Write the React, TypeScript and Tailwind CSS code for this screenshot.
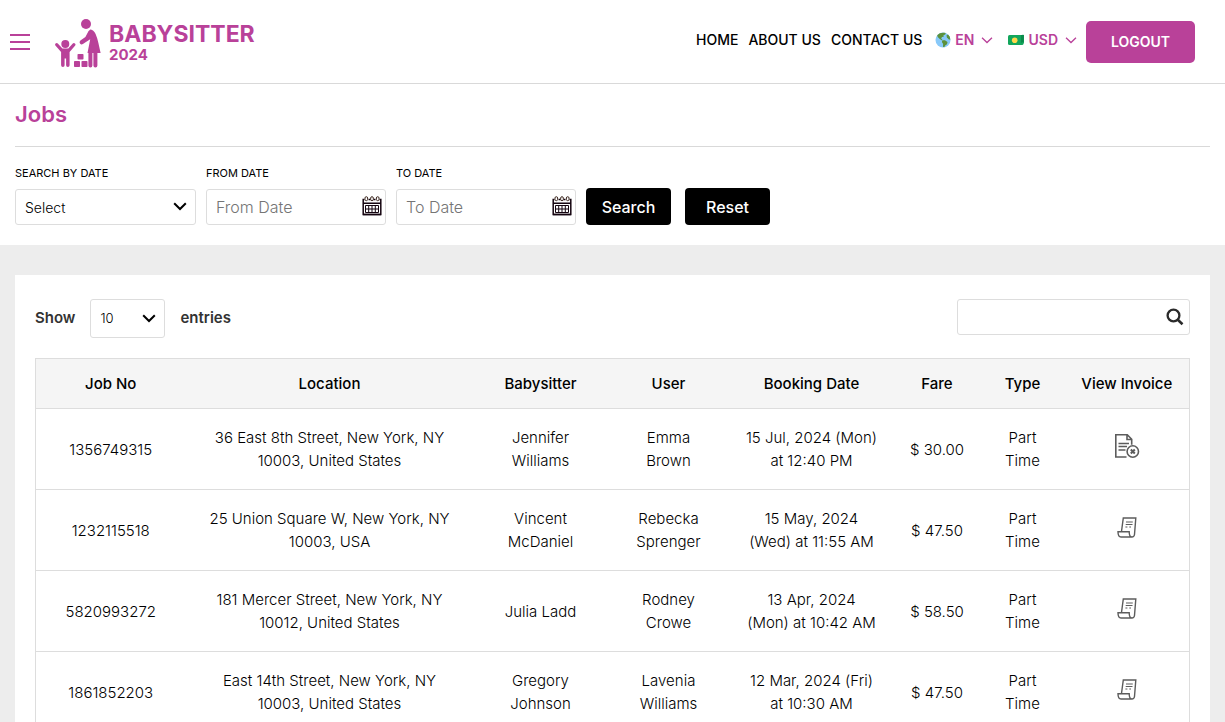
import type { ReactNode } from "react";

type Job = {
  no: string;
  location: string;
  sitter: string;
  user: string;
  date: string;
  fare: string;
  type: string;
  cancelled?: boolean;
};

const jobs: Job[] = [
  {
    no: "1356749315",
    location: "36 East 8th Street, New York, NY\n10003, United States",
    sitter: "Jennifer\nWilliams",
    user: "Emma\nBrown",
    date: "15 Jul, 2024 (Mon)\nat 12:40 PM",
    fare: "$ 30.00",
    type: "Part\nTime",
    cancelled: true,
  },
  {
    no: "1232115518",
    location: "25 Union Square W, New York, NY\n10003, USA",
    sitter: "Vincent\nMcDaniel",
    user: "Rebecka\nSprenger",
    date: "15 May, 2024\n(Wed) at 11:55 AM",
    fare: "$ 47.50",
    type: "Part\nTime",
  },
  {
    no: "5820993272",
    location: "181 Mercer Street, New York, NY\n10012, United States",
    sitter: "Julia Ladd",
    user: "Rodney\nCrowe",
    date: "13 Apr, 2024\n(Mon) at 10:42 AM",
    fare: "$ 58.50",
    type: "Part\nTime",
  },
  {
    no: "1861852203",
    location: "East 14th Street, New York, NY\n10003, United States",
    sitter: "Gregory\nJohnson",
    user: "Lavenia\nWilliams",
    date: "12 Mar, 2024 (Fri)\nat 10:30 AM",
    fare: "$ 47.50",
    type: "Part\nTime",
  },
];

const columns = [
  { label: "Job No", width: "w-[150px]" },
  { label: "Location", width: "w-[288px]" },
  { label: "Babysitter", width: "w-[134px]" },
  { label: "User", width: "w-[122px]" },
  { label: "Booking Date", width: "w-[164px]" },
  { label: "Fare", width: "w-[87px]" },
  { label: "Type", width: "w-[84px]" },
  { label: "View Invoice", width: "w-[125px]" },
];

function LogoMark() {
  return (
    <svg width="47" height="49" viewBox="0 0 47 49" fill="#b94199" aria-hidden="true">
      <circle cx="31" cy="5" r="5" />
      <path d="M34 10.5c3.200-.3 5.500 1.600 6.600 4.500 2.600 6 3.400 12 5 19h-3.200v12.500a2 2 0 0 1-4 0V34h-1v12.500a2 2 0 0 1-4 0V34h-.900l2.700-13.800-7.300 4.900a2.200 2.200 0 0 1-2.500-3.600l5-3.400 2.400-4.600c.7-1.700 2-2.800 3.200-3z" />
      <circle cx="10.300" cy="25" r="4" />
      <path d="M.6 24.600a1.500 1.500 0 0 1 2.200 0l4.600 5h5.900l4.500-5a1.500 1.500 0 0 1 2.200 2.100l-5.400 6.300v13.300a1.700 1.700 0 0 1-3.500 0V39.500h-1.500v6.800a1.700 1.700 0 0 1-3.500 0V33L.6 26.700a1.500 1.500 0 0 1 0-2.100z" />
      <rect x="22.500" y="35" width="6" height="5.500" rx=".8" />
      <rect x="19" y="42" width="6" height="6" rx=".8" />
      <rect x="26.500" y="42" width="6" height="6" rx=".8" />
    </svg>
  );
}

function GlobeIcon() {
  return (
    <svg width="16" height="16" viewBox="0 0 16 16" aria-hidden="true">
      <circle cx="8" cy="8" r="7.500" fill="#88c9f9" />
      <path d="M2.200 3.200C4.500.6 7.500.2 10.700 1l-.5 1.500-1.700.8.200 1.500-1.700.3-.8 1.300L7.500 8l-1 .3-2-1.500L2.700 5z" fill="#5c913b" />
      <path d="M7.400 8.300l2.500-.1 2.600 1.800-.5 2.200-1.600 1-1.200 2-1.200-.4.1-2.800L6.900 10z" fill="#5c913b" />
      <path d="M11.500 3.200l1.500-.6 1.800 2.200.5 3-1.800-.5-1.600-2z" fill="#5c913b" />
    </svg>
  );
}

function MoneyIcon() {
  return (
    <svg width="16" height="12" viewBox="0 0 16 12" aria-hidden="true">
      <path d="M1.500 2.300C4.500.3 11 2 15 .7c.6-.1 1 .3 1 .8v6.600c0 1.500-1.500 2-3 2.500z" fill="#0b8a4b" />
      <rect y="1" width="15.500" height="10" rx="1.500" fill="#12a65c" />
      <circle cx="6.700" cy="6.200" r="2.800" fill="#ffd84a" />
      <path d="M13 1h2.500v6.500L13 9z" fill="#0b8a4b" />
    </svg>
  );
}

function Chevron({ size = 14, stroke = 2 }: { size?: number; stroke?: number }) {
  return (
    <svg width={size} height={size} viewBox="0 0 14 14" fill="none" stroke="currentColor" strokeWidth={stroke} aria-hidden="true">
      <path d="M1.200 4.300 7 10l5.800-5.700" />
    </svg>
  );
}

function CalendarIcon() {
  return (
    <svg width="20" height="20" viewBox="0 0 20 20" fill="none" stroke="#150510" aria-hidden="true">
      <path d="M2.500 3.500H1.200v15h17.600v-15h-1.300M6.500 3.500h2M11.500 3.500h2M1 7.200h18" strokeWidth="1.500" />
      <rect x="3" y=".7" width="2.600" height="4" rx="1.300" stroke="#3f2a22" />
      <rect x="8.700" y=".7" width="2.600" height="4" rx="1.300" stroke="#3f2a22" />
      <rect x="14.400" y=".7" width="2.600" height="4" rx="1.300" stroke="#3f2a22" />
      <path d="M3.500 9.500h13v7h-13zM3.500 13h13M6.700 9.500v7M10 9.500v7M13.300 9.500v7" />
      <path d="M1 18.500h18" strokeWidth="1.500" />
    </svg>
  );
}

function SearchIcon() {
  return (
    <svg width="18" height="18" viewBox="0 0 18 18" fill="none" stroke="#2a2a2a" aria-hidden="true">
      <circle cx="7.500" cy="7.500" r="5.900" strokeWidth="2.300" />
      <path d="m11.800 11.800 4.700 4.400" strokeWidth="2.600" />
    </svg>
  );
}

function CancelledInvoiceIcon() {
  return (
    <svg width="26" height="26" viewBox="0 0 26 26" fill="none" stroke="#5c5c5c" aria-hidden="true">
      <path d="M12.500 24H1.800V1.800h11.500l4.400 4.500v5.500M13 1.800v4.700h4.700" strokeWidth="1.600" />
      <path d="M4.500 10.500h10.500M4.500 13.500h8.500M4.500 17h7" strokeWidth="1.400" />
      <circle cx="18.800" cy="18.500" r="5.700" fill="#fff" strokeWidth="1.600" />
      <path d="m16.800 16.500 4 4M20.800 16.500l-4 4" strokeWidth="2" />
    </svg>
  );
}

function InvoiceIcon() {
  return (
    <svg width="20" height="21" viewBox="0 0 20 21" fill="none" stroke="#5c5c5c" strokeWidth="1.400" aria-hidden="true">
      <path d="M4.500 14.500 6.300 1h12.500L17.500 17.500c-.2 1.700-1 2.500-2.600 2.500H4C2 20 1 18.500 1 14.800h11.200c0 3 .7 5.200 2.700 5.200" />
      <path d="M9 5h6.800M8.700 7.500h6.800M8.400 10h2M12.300 10h1.700" strokeWidth="1.200" />
    </svg>
  );
}

function DateField({ id, label, placeholder }: { id: string; label: string; placeholder: string }) {
  return (
    <div className="w-[180px]">
      <FieldLabel id={id}>{label}</FieldLabel>
      <div className="relative">
        <input
          id={id}
          type="text"
          placeholder={placeholder}
          className="h-9 w-full rounded-[3px] border border-[#ddd] bg-white pr-8 pl-[9px] text-base font-light placeholder:text-[#757575]"
        />
        <span className="pointer-events-none absolute top-[7px] right-1">
          <CalendarIcon />
        </span>
      </div>
    </div>
  );
}

function FieldLabel({ id, children }: { id: string; children: ReactNode }) {
  return (
    <label htmlFor={id} className="mb-2 block text-[11px] leading-4 uppercase">
      {children}
    </label>
  );
}

export default function App() {
  return (
    <div className="min-h-screen bg-[#ededed] font-[Inter,sans-serif] text-black">
      <header className="flex h-[84px] items-center justify-between border-b border-[#d9d9d9] bg-white pr-[30px] pl-[10px]">
        <div className="flex items-center gap-[25px]">
          <button type="button" aria-label="Menu" className="flex w-5 flex-col gap-[5px]">
            <span className="h-[2px] w-full bg-[#b94199]" />
            <span className="h-[2px] w-full bg-[#b94199]" />
            <span className="h-[2px] w-full bg-[#b94199]" />
          </button>
          <a href="#" className="flex items-center gap-[7px] pt-[3px] text-[#b94199]">
            <LogoMark />
            <span className="flex flex-col font-bold">
              <span className="text-[23px] leading-6">BABYSITTER</span>
              <span className="text-[15px] leading-[18px]">2024</span>
            </span>
          </a>
        </div>
        <nav className="flex items-center text-sm font-medium whitespace-nowrap">
          <div className="flex items-center pb-[3px]">
            <div className="flex gap-[10px]">
              <a href="#">HOME</a>
              <a href="#">ABOUT US</a>
              <a href="#">CONTACT US</a>
            </div>
            <button type="button" className="ml-[13px] flex items-center gap-1 font-semibold text-[#b94199]">
              <GlobeIcon />
              EN
              <span className="ml-[3px]">
                <Chevron size={12} stroke={1.5} />
              </span>
            </button>
            <button type="button" className="ml-[15px] flex items-center gap-1 font-semibold text-[#b94199]">
              <MoneyIcon />
              USD
              <span className="ml-[3px]">
                <Chevron size={12} stroke={1.5} />
              </span>
            </button>
          </div>
          <button type="button" className="ml-[9px] h-[42px] w-[109px] rounded-[5px] bg-[#b94199] font-semibold text-white">
            LOGOUT
          </button>
        </nav>
      </header>

      <section className="bg-white px-[15px] pb-5">
        <h1 className="border-b border-[#d9d9d9] pt-[14px] pb-4 text-[22px] leading-8 font-semibold text-[#b94199]">Jobs</h1>
        <form className="flex flex-wrap items-end gap-[10px] pt-[18px]" onSubmit={(e) => e.preventDefault()}>
          <div className="w-[181px]">
            <FieldLabel id="range">Search by date</FieldLabel>
            <div className="relative">
              <select id="range" className="h-9 w-full appearance-none rounded-[3px] border border-[#ddd] bg-white pt-[2px] pl-[9px] text-sm font-light">
                <option>Select</option>
              </select>
              <span className="pointer-events-none absolute top-[10px] right-[9px]">
                <Chevron />
              </span>
            </div>
          </div>
          <DateField id="from" label="From date" placeholder="From Date" />
          <DateField id="to" label="To date" placeholder="To Date" />
          <div className="flex gap-[14px]">
            <button type="submit" className="h-[37px] w-[85px] rounded-[4px] bg-black text-base font-medium text-white">
              Search
            </button>
            <button type="reset" className="h-[37px] w-[85px] rounded-[4px] bg-black text-base font-medium text-white">
              Reset
            </button>
          </div>
        </form>
      </section>

      <main className="mx-[15px] mt-[30px] bg-white px-5 pt-6 pb-5">
        <div className="flex items-start justify-between">
          <div className="flex items-center gap-[15px] text-[15px] font-semibold text-[#333]">
            <label htmlFor="entries">Show</label>
            <div className="relative">
              <select id="entries" className="h-[39px] w-[75px] appearance-none rounded-[3px] border border-[#ddd] bg-white pl-[9px] text-[13px] font-light text-black">
                <option>10</option>
              </select>
              <span className="pointer-events-none absolute top-3 right-[9px] text-black">
                <Chevron />
              </span>
            </div>
            <span>entries</span>
          </div>
          <div className="relative">
            <input
              type="search"
              aria-label="Search jobs"
              className="h-9 w-[233px] rounded-[3px] border border-[#ddd] bg-white pr-8 pl-[9px] text-sm"
            />
            <button type="button" aria-label="Search" className="absolute top-[9px] right-[6px]">
              <SearchIcon />
            </button>
          </div>
        </div>

        <table className="mt-5 w-full table-fixed border-collapse border border-[#ddd] text-center text-[15px]">
          <thead>
            <tr className="h-[50px] border-b border-[#ddd] bg-[#f5f5f5]">
              {columns.map((c) => (
                <th key={c.label} scope="col" className={`${c.width} pt-[2px] text-[15px] font-medium whitespace-nowrap`}>
                  {c.label}
                </th>
              ))}
            </tr>
          </thead>
          <tbody>
            {jobs.map((job) => (
              <tr key={job.no} className="h-[81px] border-b border-[#ddd] leading-[23px] font-light whitespace-pre-line">
                <td>{job.no}</td>
                <td>{job.location}</td>
                <td>{job.sitter}</td>
                <td>{job.user}</td>
                <td>{job.date}</td>
                <td>{job.fare}</td>
                <td>{job.type}</td>
                <td>
                  <a href="#" aria-label="View invoice" className="mb-1.5 inline-flex align-middle">
                    {job.cancelled ? <CancelledInvoiceIcon /> : <InvoiceIcon />}
                  </a>
                </td>
              </tr>
            ))}
          </tbody>
        </table>
      </main>
    </div>
  );
}
